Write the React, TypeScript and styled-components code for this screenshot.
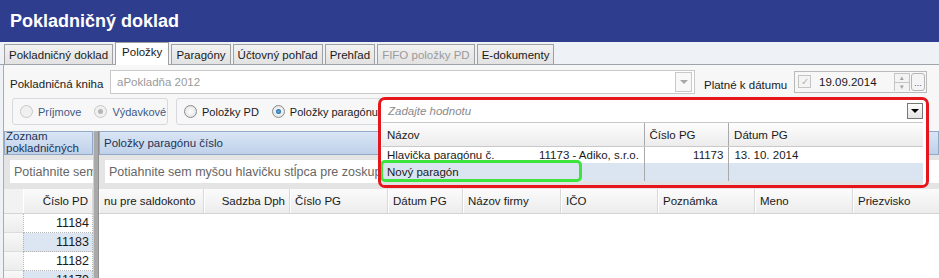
import styled, {createGlobalStyle, css} from 'styled-components';

const GlobalStyle = createGlobalStyle`
  body {
    margin: 0;
    font-family: "Liberation Sans", Arial, sans-serif;
    font-size: 11px;
    color: #1a1a1a;
  }
`;

const tabs = [
  {label: 'Pokladničný doklad'},
  {label: 'Položky', active: true},
  {label: 'Paragóny'},
  {label: 'Účtovný pohľad'},
  {label: 'Prehľad'},
  {label: 'FIFO položky PD', disabled: true},
  {label: 'E-dokumenty'},
];

const rightColumns = [
  {label: 'nu pre saldokonto', width: 105},
  {label: 'Sadzba Dph', width: 86, right: true},
  {label: 'Číslo PG', width: 98},
  {label: 'Dátum PG', width: 75},
  {label: 'Názov firmy', width: 98},
  {label: 'IČO', width: 97},
  {label: 'Poznámka', width: 97},
  {label: 'Meno', width: 98},
  {label: 'Priezvisko', width: 90},
];

const leftRows = [
  {value: '11184'},
  {value: '11183', alt: true},
  {value: '11182'},
  {value: '11179', alt: true},
];

export default function App() {
  return (
    <Screen>
      <GlobalStyle />
      <TitleBar>Pokladničný doklad</TitleBar>

      <TabStrip>
        {tabs.map(({label, active, disabled}) => (
          <Tab key={label} $active={active} $disabled={disabled}>
            {label}
          </Tab>
        ))}
      </TabStrip>

      <Content>
        <FormRow>
          <Label>Pokladničná kniha</Label>
          <Combo>
            <ComboText>aPokladňa 2012</ComboText>
            <ComboButton>
              <Arrow $color="#a8a8a8" />
            </ComboButton>
          </Combo>
          <DateLabel>Platné k dátumu</DateLabel>
          <DateBox>
            <CheckBox>✓</CheckBox>
            <DateText>19.09.2014</DateText>
            <Spin>
              <SpinHalf>▴</SpinHalf>
              <SpinHalf>▾</SpinHalf>
            </Spin>
            <DotsButton>...</DotsButton>
          </DateBox>
        </FormRow>

        <OptionsRow>
          <GroupBox $width={156}>
            <RadioItem $disabled>
              <Radio $disabled />
              Príjmove
            </RadioItem>
            <RadioItem $disabled>
              <Radio $disabled $checked />
              Výdavkové
            </RadioItem>
          </GroupBox>
          <GroupBox $width={215}>
            <RadioItem>
              <Radio />
              Položky PD
            </RadioItem>
            <RadioItem>
              <Radio $checked />
              Položky paragónu
            </RadioItem>
          </GroupBox>
        </OptionsRow>

        <GridArea>
          <LeftPane>
            <PaneHeader>
              <WrappedTitle>Zoznam pokladničných dokladov</WrappedTitle>
            </PaneHeader>
            <GroupPanel>
              <GroupHint>Potiahnite sem myšou hlavičku</GroupHint>
            </GroupPanel>
            <ColumnRow>
              <IndicatorHead />
              <ColumnHead $width={70} $right>
                Číslo PD
              </ColumnHead>
            </ColumnRow>
            {leftRows.map(({value, alt}) => (
              <DataRow key={value}>
                <Indicator />
                <Cell $alt={alt}>{value}</Cell>
              </DataRow>
            ))}
          </LeftPane>

          <Splitter />

          <RightPane>
            <PaneHeader>
              <HeaderTitle>Položky paragónu číslo</HeaderTitle>
              <Funnel viewBox="0 0 14 14">
                <path
                  d="M1 2h12l-4.5 5v5l-3-1.5V7z"
                  fill="#f4f6f9"
                  stroke="#9aa4b0"
                  strokeWidth="1"
                />
              </Funnel>
            </PaneHeader>
            <GroupPanel>
              <GroupHint>
                Potiahnite sem myšou hlavičku stĺpca pre zoskupenie
              </GroupHint>
            </GroupPanel>
            <ColumnRow>
              {rightColumns.map(({label, width, right}) => (
                <ColumnHead key={label} $width={width} $right={right}>
                  {label}
                </ColumnHead>
              ))}
            </ColumnRow>
          </RightPane>
        </GridArea>
      </Content>

      <Popup>
        <PopupInput>
          <Placeholder>Zadajte hodnotu</Placeholder>
          <PopupButton>
            <Arrow $color="#000" />
          </PopupButton>
        </PopupInput>
        <PopupGrid>
          <PopupRow $kind="head">
            <PopupCell $width={264}>Názov</PopupCell>
            <PopupCell $width={85}>Číslo PG</PopupCell>
            <PopupCell $width={195}>Dátum PG</PopupCell>
          </PopupRow>
          <PopupRow $kind="row">
            <PopupCell $width={264}>
              <NameText>Hlavička paragónu č.</NameText>
              11173 - Adiko, s.r.o.
            </PopupCell>
            <PopupCell $width={85} $right>
              11173
            </PopupCell>
            <PopupCell $width={195}>13. 10. 2014</PopupCell>
          </PopupRow>
          <PopupRow $kind="selected">
            <PopupCell $width={264}>Nový paragón</PopupCell>
            <PopupCell $width={85} />
            <PopupCell $width={195} />
          </PopupRow>
        </PopupGrid>
        <Highlight />
      </Popup>
    </Screen>
  );
}

const Screen = styled.div`
  position: relative;
  width: 939px;
  height: 278px;
  overflow: hidden;
  background: #eef1f5;
`;

const TitleBar = styled.div`
  height: 42px;
  display: flex;
  align-items: center;
  padding-left: 10px;
  background: #2f3d8f;
  color: #fff;
  font-size: 18px;
  font-weight: bold;
`;

const TabStrip = styled.div`
  display: flex;
  align-items: flex-end;
  height: 22px;
  padding-left: 4px;
  border-bottom: 1px solid #9fa4aa;
`;

const Tab = styled.div<{$active?: boolean; $disabled?: boolean}>`
  height: 19px;
  display: flex;
  align-items: center;
  padding: 0 4px;
  margin-right: 2px;
  border: 1px solid #a0a0a0;
  border-bottom: none;
  background: linear-gradient(#f2f2f2, #e2e2e2);
  color: ${({$disabled}) => ($disabled ? '#9a9a9a' : '#1a1a1a')};
  white-space: nowrap;
  font-size: 11.5px;

  ${({$active}) =>
    $active &&
    css`
      height: 23px;
      margin-bottom: -1px;
      align-items: flex-start;
      padding: 3px 6px 0;
      box-sizing: border-box;
      background: #fff;
      position: relative;
    `}
`;

const Content = styled.div`
  background: #f7f7f8;
  border-left: 1px solid #a8adb3;
  margin-left: 3px;
  height: 213px;
`;

const FormRow = styled.div`
  display: flex;
  align-items: center;
  height: 33px;
  padding-left: 6px;
`;

const Label = styled.div`
  width: 100px;
  margin-top: 4px;
  font-size: 11.5px;
`;

const Combo = styled.div`
  width: 585px;
  height: 24px;
  box-sizing: border-box;
  border: 1px solid #c9c9c9;
  background: #fff;
  display: flex;
  align-items: center;
  padding-left: 6px;
`;

const ComboText = styled.div`
  flex: 1;
  color: #9a9a9a;
  font-size: 11.5px;
`;

const ComboButton = styled.div`
  width: 15px;
  height: 18px;
  margin-right: 2px;
  border: 1px solid #c9c9c9;
  display: flex;
  align-items: center;
  justify-content: center;
  background: #f8f8f8;
`;

const Arrow = styled.div<{$color: string}>`
  width: 0;
  height: 0;
  border-left: 4px solid transparent;
  border-right: 4px solid transparent;
  border-top: 4px solid ${({$color}) => $color};
`;

const DateLabel = styled.div`
  margin: 6px 0 0 9px;
  width: 90px;
  font-size: 11.5px;
`;

const DateBox = styled.div`
  width: 133px;
  height: 22px;
  box-sizing: border-box;
  border: 1px solid #b9b9b9;
  background: #f7f7f7;
  display: flex;
  align-items: center;
  padding-left: 3px;
`;

const CheckBox = styled.div`
  width: 11px;
  height: 11px;
  border: 1px solid #c4c4c4;
  background: #f4f4f4;
  color: #b5b5b5;
  font-size: 10px;
  line-height: 11px;
  text-align: center;
  margin-right: 8px;
`;

const DateText = styled.div`
  flex: 1;
  font-size: 11.5px;
`;

const Spin = styled.div`
  width: 14px;
  height: 16px;
  border: 1px solid #c4c4c4;
  display: flex;
  flex-direction: column;
  margin-right: 1px;
`;

const SpinHalf = styled.div`
  flex: 1;
  font-size: 7px;
  line-height: 8px;
  text-align: center;
  color: #a0a0a0;
  background: #f3f3f3;

  & + & {
    border-top: 1px solid #c4c4c4;
  }
`;

const DotsButton = styled.div`
  width: 12px;
  height: 16px;
  border: 1px solid #b5b5b5;
  border-radius: 3px;
  background: #f4f4f4;
  font-size: 9px;
  line-height: 18px;
  text-align: center;
  color: #555;
  margin-right: 1px;
`;

const OptionsRow = styled.div`
  display: flex;
  gap: 8px;
  padding: 0 0 0 8px;
  height: 33px;
  align-items: flex-start;
`;

const GroupBox = styled.div<{$width: number}>`
  width: ${({$width}) => $width}px;
  height: 27px;
  box-sizing: border-box;
  border: 1px solid #d6d9dd;
  border-radius: 3px;
  display: flex;
  align-items: center;
  gap: 13px;
  padding-left: 7px;
  white-space: nowrap;
`;

const RadioItem = styled.div<{$disabled?: boolean}>`
  display: flex;
  align-items: center;
  gap: 5px;
  font-size: 11px;
  color: ${({$disabled}) => ($disabled ? '#3c5a84' : '#1a1a1a')};
`;

const Radio = styled.div<{$checked?: boolean; $disabled?: boolean}>`
  width: 11px;
  height: 11px;
  border-radius: 50%;
  border: 1px solid ${({$disabled}) => ($disabled ? '#c8c8c8' : '#8c8c8c')};
  background: ${({$disabled}) =>
    $disabled ? '#f0f0f0' : 'radial-gradient(#ffffff, #dcdcdc)'};
  display: flex;
  align-items: center;
  justify-content: center;

  &::after {
    content: '';
    display: ${({$checked}) => ($checked ? 'block' : 'none')};
    width: 5px;
    height: 5px;
    border-radius: 50%;
    background: ${({$disabled}) =>
      $disabled ? '#b5b5b5' : 'radial-gradient(#5fb0e8, #0d4f86)'};
  }
`;

const GridArea = styled.div`
  display: flex;
  height: 148px;
`;

const LeftPane = styled.div`
  width: 89px;
  background: #fff;
`;

const Splitter = styled.div`
  width: 6px;
  background: #a9a9a9;
  border-left: 1px solid #d0d0d0;
  border-right: 1px solid #8f8f8f;
  box-sizing: border-box;
`;

const RightPane = styled.div`
  flex: 1;
  background: #fff;
  overflow: hidden;
`;

const PaneHeader = styled.div`
  height: 24px;
  box-sizing: border-box;
  background: linear-gradient(#d9e5f5, #bfd1ea);
  border: 1px solid #93a9c8;
  color: #1c3357;
  display: flex;
  align-items: center;
  overflow: hidden;
  position: relative;
  font-size: 11.5px;
`;

const WrappedTitle = styled.div`
  width: 80px;
  line-height: 12px;
  padding-left: 1px;
  align-self: flex-start;
  position: relative;
  top: -2px;
`;

const HeaderTitle = styled.div`
  padding-left: 4px;
  flex: 1;
`;

const Funnel = styled.svg`
  width: 14px;
  height: 14px;
  margin-right: 8px;
`;

const GroupPanel = styled.div`
  height: 34px;
  box-sizing: border-box;
  background: #e4e4e4;
  padding: 5px 0 5px 6px;
  overflow: hidden;
`;

const GroupHint = styled.div`
  height: 23px;
  display: flex;
  align-items: center;
  padding-left: 4px;
  background: #fff;
  color: #666;
  white-space: nowrap;
  overflow: hidden;
  font-size: 12.5px;
`;

const ColumnRow = styled.div`
  display: flex;
  height: 24px;
  border-bottom: 1px solid #d4d4d4;
  background: #f2f2f2;
  white-space: nowrap;
`;

const IndicatorHead = styled.div`
  width: 19px;
  background: #f2f2f2;
`;

const ColumnHead = styled.div<{$width: number; $right?: boolean}>`
  width: ${({$width}) => $width}px;
  flex-shrink: 0;
  box-sizing: border-box;
  display: flex;
  align-items: center;
  justify-content: ${({$right}) => ($right ? 'flex-end' : 'flex-start')};
  padding: 0 4px;
  background: linear-gradient(#fbfbfb, #ececec);
  border-right: 1px solid #d8d8d8;
  border-left: 1px solid #fff;
  overflow: hidden;
  font-size: 11.5px;
`;

const DataRow = styled.div`
  display: flex;
  height: 19px;
`;

const Indicator = styled.div`
  width: 19px;
  background: linear-gradient(#f8f8f8, #ececec);
  border-bottom: 1px solid #dcdcdc;
`;

const Cell = styled.div<{$alt?: boolean}>`
  width: 70px;
  box-sizing: border-box;
  text-align: right;
  padding-right: 3px;
  line-height: 18px;
  font-size: 12.5px;
  border: 1px dotted #b5b5b5;
  border-top: none;
  background: ${({$alt}) => ($alt ? '#dce6f2' : '#fff')};
`;

const Popup = styled.div`
  position: absolute;
  left: 378px;
  top: 97px;
  width: 551px;
  height: 91px;
  box-sizing: border-box;
  border: 3px solid #e5161c;
  border-radius: 7px;
  background: #fff;
  padding: 0 3px 0 1px;
  overflow: hidden;
`;

const PopupInput = styled.div`
  height: 22px;
  display: flex;
  align-items: center;
  padding-left: 6px;
  border-bottom: 1px solid #c8c8c8;
`;

const Placeholder = styled.div`
  flex: 1;
  font-style: italic;
  color: #8a8a8a;
  font-size: 11.5px;
`;

const PopupButton = styled.div`
  width: 14px;
  height: 14px;
  border: 1px solid #777;
  background: linear-gradient(#fdfdfd, #e4e4e4);
  display: flex;
  align-items: center;
  justify-content: center;
`;

const rowStyles = {
  head: css`
    height: 23px;
    background: linear-gradient(#fdfdfd, #ececec);
    border-bottom: 1px solid #c9c9c9;
  `,
  row: css`
    height: 16px;
    background: #fff;
  `,
  selected: css`
    height: 18px;
    background: #dae5f1;
  `,
};

const PopupGrid = styled.div`
  background: #e2e2e2;
  height: 62px;
`;

const PopupRow = styled.div<{$kind: keyof typeof rowStyles}>`
  display: flex;
  ${({$kind}) => rowStyles[$kind]}
`;

const PopupCell = styled.div<{$width: number; $right?: boolean}>`
  width: ${({$width}) => $width}px;
  box-sizing: border-box;
  display: flex;
  align-items: center;
  justify-content: ${({$right}) => ($right ? 'flex-end' : 'flex-start')};
  padding: 0 5px;
  border-right: 1px solid #a9a9a9;
  white-space: nowrap;
  font-size: 11.5px;

  &:last-child {
    border-right: none;
  }
`;

const NameText = styled.span`
  width: 152px;
  flex-shrink: 0;
`;

const Highlight = styled.div`
  position: absolute;
  left: -1px;
  top: 60px;
  width: 202px;
  height: 22px;
  box-sizing: border-box;
  border: 3px solid #3ee43e;
  border-radius: 5px;
`;
